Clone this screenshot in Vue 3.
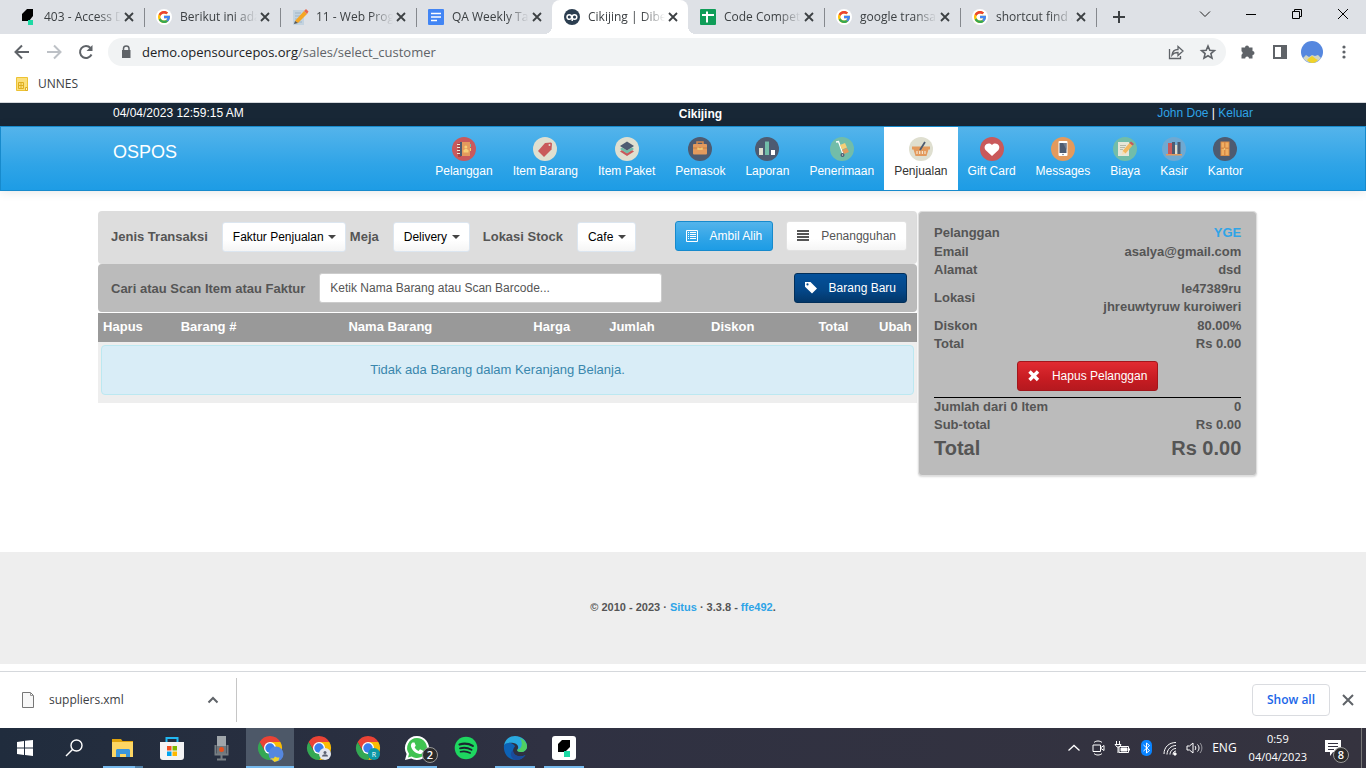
<script setup>
const googleMark = `<circle cx="8" cy="8" r="8" fill="#fff"/><g transform="translate(.8 .8) scale(.3)">
<path fill="#FFC107" d="M43.6 20.1H42V20H24v8h11.3c-1.6 4.7-6.1 8-11.3 8-6.600 0-12-5.400-12-12s5.400-12 12-12c3.100 0 5.800 1.200 8 3l5.600-5.600C34 6.100 29.300 4 24 4 13 4 4 13 4 24s9 20 20 20 20-9 20-20c0-1.300-.1-2.600-.4-3.900z"/>
<path fill="#EA4335" d="M6.300 14.700l6.600 4.800C14.700 15.100 19 12 24 12c3.100 0 5.800 1.200 8 3l5.600-5.600C34 6.100 29.300 4 24 4 16.300 4 9.700 8.300 6.300 14.700z"/>
<path fill="#34A853" d="M24 44c5.200 0 9.900-2 13.400-5.200l-6.200-5.200C29.200 35.100 26.700 36 24 36c-5.200 0-9.600-3.300-11.300-7.900l-6.500 5C9.500 39.600 16.200 44 24 44z"/>
<path fill="#4285F4" d="M43.600 20.100H24V28h11.300c-.8 2.200-2.200 4.200-4.100 5.600l6.200 5.200C37 39.200 44 34 44 24c0-1.300-.1-2.600-.4-3.900z"/></g>`

const tabs = [
  { title: '403 - Access D', sep: true, icon: '<path fill="#000" d="M7 0h6v7l-4 5H2V5z"/><path fill="#1ed9a4" d="M8 11h5v5H8z"/>' },
  { title: 'Berikut ini ada', sep: true, icon: googleMark },
  { title: '11 - Web Prog', sep: true, icon: '<path fill="#c3d3e0" d="M1 1h11v15H1z"/><path stroke="#9fb3c4" d="M3 4h6M3 7h6M3 10h4M3 13h7"/><path fill="#f5a623" d="M3 12L12 2l3 3-9 9z"/><path fill="#e8674d" d="M12 2l2-2 2.500 2.500L15 5z"/><path fill="#555" d="M3 12l3 2-4 1z"/>' },
  { title: 'QA Weekly Ta', sep: false, icon: '<rect width="16" height="16" rx="1" fill="#4285f4"/><path stroke="#fff" stroke-width="1.500" d="M3 4.500h10M3 8h10M3 11.500h6"/>' },
  { title: 'Cikijing | Dibe', sep: false, active: true, icon: '<circle cx="8" cy="8" r="8" fill="#2c3e50"/><g fill="none" stroke="#fff" stroke-width="1.500"><circle cx="5.300" cy="8" r="2.300"/><circle cx="10.500" cy="8" r="2.300"/><path d="M8.200 7v5"/></g>' },
  { title: 'Code Compet', sep: true, icon: '<rect width="16" height="16" rx="1" fill="#0f9d58"/><path stroke="#fff" stroke-width="2" d="M2 6h12M7 2.500v11"/>' },
  { title: 'google transa', sep: true, icon: googleMark },
  { title: 'shortcut find a', sep: true, icon: googleMark },
]

const modules = [
  { name: 'Pelanggan', bg: '#c9595b', icon: '<path fill="#a44" d="M6 6h3v14H6z"/><path stroke="#f1e9d8" d="M5 7.500h3M5 10.500h3M5 13.500h3M5 16.500h3"/><path fill="#4d5b71" d="M8 5h2v14H8z"/><path fill="#e39a5d" d="M10 5h8v14h-8z"/><path stroke="#6fbfa9" d="M18.500 7v3"/><path stroke="#f2d16b" d="M18.500 11v3"/><circle cx="13.800" cy="10" r="1.500" fill="#f6cf77"/><path fill="#f6cf77" d="M11.500 15.500v-2l1.500-1.500h2l1.500 1.500v2z"/>' },
  { name: 'Item Barang', bg: '#dfdfd0', icon: '<path fill="#c9595b" d="M12 6l6-.5 1 1-.5 6L11 20l-6-6z"/><circle cx="16.500" cy="8" r="1" fill="#dfdfd0"/>' },
  { name: 'Item Paket', bg: '#dfdfd0', icon: '<path fill="#c9595b" d="M5 14.500l7 4.500 7-4.500-2-1.500-5 3-5-3z"/><path fill="#72bda9" d="M5 12l7 4.500 7-4.500-2-1.500-5 3-5-3z"/><path fill="#4d5b71" d="M12 4.500l7 4.500-7 4.500L5 9z"/>' },
  { name: 'Pemasok', bg: '#4d5b71', icon: '<path fill="none" stroke="#d48a4e" stroke-width="1.500" d="M9 7V5h6v2"/><rect x="5" y="7" width="14" height="10.500" rx="1" fill="#e39a5d"/><path stroke="#c9803f" d="M5 11h14"/><path fill="none" stroke="#f6cf77" stroke-width="1.300" d="M10 10.500v1.500h4v-1.500"/>' },
  { name: 'Laporan', bg: '#4d5b71', icon: '<path fill="#dfdfd0" d="M4 11h4v7H4z"/><path fill="#72bda9" d="M10 4.500h4V18h-4z"/><path fill="#fff" d="M16 13h4v5h-4z"/>' },
  { name: 'Penerimaan', bg: '#72bda9', icon: '<path fill="none" stroke="#fff" stroke-width="1.300" d="M6 5l2.500-.5L13 17"/><path fill="#f6cf77" d="M10 8l5-2 2 4.500-5 2z"/><path fill="#e39a5d" d="M12 13l5-2 2 4-5 2z"/><circle cx="12.500" cy="18" r="2" fill="#4d5b71"/><circle cx="12.500" cy="18" r=".7" fill="#dfdfd0"/>' },
  { name: 'Penjualan', bg: '#dfdfd0', active: true, icon: '<path fill="#e39a5d" d="M3 9.500h18v3h-1.500L17.500 19h-11L4.500 12.500H3z"/><path stroke="#f5e6cf" stroke-width="1.200" d="M8 14v3M10.700 14v3M13.400 14v3M16 14v3"/><path stroke="#4d5b71" stroke-width="1.800" d="M11 13l5-8"/>' },
  { name: 'Gift Card', bg: '#c9595b', icon: '<path fill="#fff" d="M12 19l-6.500-6c-3-4 2.500-9 6.500-5 4-4 9.500 1 6.500 5z"/>' },
  { name: 'Messages', bg: '#e39a5d', icon: '<rect x="7.500" y="4" width="9" height="15" rx="1" fill="#fff"/><path fill="#4d5b71" d="M8.500 6h7v10h-7z"/><path fill="#6f7c90" d="M12 6h3.500v7z"/><circle cx="12" cy="17.500" r=".7" fill="#4d5b71"/>' },
  { name: 'Biaya', bg: '#72bda9', icon: '<path fill="#e6e6d8" d="M5 5h11v14H5z"/><path stroke="#b5b9a9" d="M7 8.500h6M7 10.500h5M7 12.500h3"/><path fill="#f3b85e" d="M9.500 14l7-8 3 2.500-7 8z"/><path fill="#c9595b" d="M16.500 6l1.500-1.500 3 2.500-1.500 1.500z"/><path fill="#f7dfb6" d="M9.500 14l3 2.500-4 1.500z"/>' },
  { name: 'Kasir', bg: '#6fa9d2', icon: '<path fill="#c9595b" d="M6 6h4v11H6z"/><path fill="#4d5b71" d="M10 5h3v12h-3z"/><path fill="#dfdfd0" d="M13 8h2.500v9H13z"/><path fill="#4d5b71" d="M15.500 5h3v12h-3z"/><path fill="#e39a5d" d="M4 17h16v1.500H4z"/>' },
  { name: 'Kantor', bg: '#4d5b71', icon: '<path fill="#d98b46" d="M7.500 4.500h9V19h-9z"/><path fill="#f0ae62" d="M8.500 5.500H11v5H8.500zM12.500 5.500H15.500v5h-3zM8.500 12H11v6H8.500zM12.500 12h3v6h-3z"/><circle cx="11.500" cy="12" r=".8" fill="#f6e08a"/>' },
]

const columns = [
  ['Hapus', 'c-del'], ['Barang #', 'c-num'], ['Nama Barang', 'c-name'], ['Harga', 'c-price'],
  ['Jumlah', 'c-price'], ['Diskon', 'c-num'], ['Total', 'c-price'], ['Ubah', 'c-edit'],
]

const customer = [
  ['Email', 'asalya@gmail.com'], ['Alamat', 'dsd'], ['Lokasi', 'le47389ru\njhreuwtyruw kuroiweri'],
  ['Diskon', '80.00%'], ['Total', 'Rs 0.00'],
]

const chrome = '<path fill="#ea4335" d="M1.600 6A12 12 0 0 1 22.400 6H12L6.800 15z"/><path fill="#fbbc04" d="M22.400 6A12 12 0 0 1 12 24l5.200-9L12 6z"/><path fill="#34a853" d="M1.600 6l5.200 9h10.400L12 24A12 12 0 0 1 1.600 6z"/><circle cx="12" cy="12" r="6" fill="#fff"/><circle cx="12" cy="12" r="4.700" fill="#3b7ded"/>'

const apps = [
  { name: 'Start', icon: '<path fill="#fff" d="M4 6l7-1v6.500H4zM12 4.800L20 4v7.500h-8zM4 12.500h7V19l-7-1zM12 12.500h8V20l-8-1z"/>' },
  { name: 'Search', icon: '<circle cx="14.500" cy="9.500" r="5.500" fill="none" stroke="#fff" stroke-width="1.400"/><path stroke="#fff" stroke-width="1.500" d="M10.500 13.500L4 20"/>' },
  { name: 'File Explorer', run: 'multi', icon: '<path fill="#e0a30c" d="M1 3h9l1.500 2H22v3H1z"/><path fill="#fdd663" d="M1 6h21v15H1z"/><path fill="#3b96dc" d="M5 14l1-1h12l1 1v7h-4v-3H9v3H5z"/>' },
  { name: 'Microsoft Store', icon: '<path fill="none" stroke="#22b8f2" stroke-width="2" d="M6.500 7V2h11v5"/><path fill="#f4f4f4" d="M0 6h24v15a3 3 0 0 1-3 3H3a3 3 0 0 1-3-3z"/><path fill="#f25022" d="M7 10h4.500v4.500H7z"/><path fill="#7fba00" d="M12.500 10H17v4.500h-4.500z"/><path fill="#00a4ef" d="M7 15.500h4.500V20H7z"/><path fill="#ffb900" d="M12.500 15.500H17V20h-4.500z"/>' },
  { name: 'Recorder', icon: '<path fill="#a0a6aa" d="M8 0h9v10H8z"/><path fill="#6f777c" d="M8 10h9v8H8z"/><path fill="none" stroke="#777e83" stroke-width="2" d="M6.500 9v9.500h12V9M12.500 19v4M8 23.500h9"/><circle cx="12.500" cy="13.500" r="2.500" fill="#e8501c"/>' },
  { name: 'Chrome, first profile', run: 'on', focus: true, icon: chrome + '<circle cx="18" cy="18" r="7.500" fill="#5587df"/><path fill="#f0d32a" d="M12.500 22l3 .5 1.500-2 2 1 2.500 0-1 3-4 1.500z"/>' },
  { name: 'Chrome, second profile', icon: chrome + '<circle cx="18" cy="18" r="6" fill="#e4e7ee"/><circle cx="18" cy="16.500" r="1.500" fill="#5b6070"/><path fill="#5b6070" d="M15 20.500c0-3 6-3 6 0z"/>' },
  { name: 'Chrome, third profile', icon: chrome + '<circle cx="18" cy="18" r="6" fill="#0d98a6"/><text x="18" y="20.500" text-anchor="middle" font-family="Open Sans, sans-serif" font-size="7" fill="#fff">R</text>' },
  { name: 'WhatsApp', run: 'on', badge: '2', icon: '<path fill="#fff" d="M12 0a12 12 0 1 1-5.800 22.500L0 24l1.600-6A12 12 0 0 1 12 0z"/><path fill="#40c351" d="M12 2a10 10 0 1 1-5.300 18.500L3 21.400l1-3.600A10 10 0 0 1 12 2z"/><path fill="#fff" d="M7.500 6.500h2l1.300 3.200-1.200 1.500c1 1.900 2.200 3 4 3.700l1.400-1.600 3.200 1.500c0 2.500-2 3.500-3.500 3.200C10 17.200 7 14 6 10.500c-.3-1.500.3-3.200 1.500-4z"/>' },
  { name: 'Spotify', icon: '<circle cx="12" cy="12" r="11.300" fill="#1ed760"/><g fill="none" stroke="#1b2630" stroke-linecap="round"><path stroke-width="2.200" d="M5.500 8.500c4.500-1.300 9.500-.8 13.300 1.400"/><path stroke-width="1.900" d="M6 12.300c4-1.100 8-.6 11.500 1.400"/><path stroke-width="1.600" d="M6.500 15.800c3.400-.9 6.600-.5 9.700 1.200"/></g>' },
  { name: 'Edge', run: 'on', icon: '<path fill="#0d62b5" d="M1 9C0 17 5 24 13 24c4 0 7.500-2 9.500-5-6 3-12 1-12.500-4 0-3 2-4 2-5C9 6 3 5 1 9z"/><path fill="#2aa9e0" d="M1 9C2.500 3 7 0 12 0c7.500 0 12 5.500 12 10 0 4-3 6-6 6-2.500 0-4.500-1-3.500-2.500 2-3-.5-6-4-6.500C6.500 6.400 3 7 1 9z"/><path fill="#50cf62" d="M17 2c5 2 7 5.500 7 8.500 0 3.500-3 5.500-6 5.500-2.500 0-4.500-1-3.500-2.500 4 0 6-6 2.500-11.500z"/><path fill="#1b4b9a" d="M10 14c0 5 6 8 12.500 5-2 3-5 5-9.500 5-5-1-7-7-3-10z"/>' },
  { name: 'Katalon', run: 'on', icon: '<rect width="24" height="24" rx="3" fill="#fff"/><path fill="#000" d="M10 4h8v7l-5 5H6V8z"/><path fill="#1ed9a4" d="M12 15h6v6h-6z"/>' },
]

const tray = [
  '<path stroke-width="1.300" d="M2.500 10.500L8 5.500l5.500 5"/>',
  '<path d="M4 2.500c2-2 6-2 8 0M4 13.500c2 2 6 2 8 0M3 5h7.500v6.500H3zM11 7.500l3-2v5l-3-2"/>',
  '<path d="M5 6.500h9.500v6H5zM15.500 8.500v2M2.500 1v3M5.500 1v3M1 4.500h6L5.500 7H3zM4 7v6"/><path fill="#fff" d="M7 8h6v3H7z"/>',
  '<rect x="3" y="0" width="11" height="16" rx="5" fill="#0a84ff" stroke="none"/><path d="M5.500 5l6 5.500-3 2.500V3l3 2.500-6 5.500"/>',
  '<path d="M2 14C2 7 7 2.500 14 2.500M5 14.500c0-5 4-9 9-9M8 14.500c0-3.500 3-6 6-6M11 14.500c0-2 1.500-3.500 3-3.500"/><path fill="#fff" d="M12 13h2v2h-2z"/>',
  '<path d="M1 6h2.500L7 3v10l-3.500-3H1zM9 6c1 1 1 3 0 4M11.500 4.500c2 2 2 5 0 7"/><path opacity=".5" d="M14 3c2.500 3 2.500 7 0 10"/>',
]
</script>

<template>
  <div class="desktop">
    <header class="browser">
      <div class="tabstrip">
        <div v-for="t in tabs" :key="t.title" class="tab" :class="{ active: t.active, sep: t.sep }">
          <svg class="i16" viewBox="0 0 16 16" v-html="t.icon"></svg>
          <span class="tab-title">{{ t.title }}</span>
          <button class="bare" aria-label="Close tab">
            <svg class="i16" viewBox="0 0 16 16"><path stroke="#3c4043" stroke-width="1.800" d="M4 4l8 8M12 4l-8 8" /></svg>
          </button>
        </div>
        <button class="bare new-tab" aria-label="New tab">
          <svg class="i16" viewBox="0 0 16 16"><path stroke="#3c4043" stroke-width="2" d="M8 2v12M2 8h12" /></svg>
        </button>
        <div class="window-buttons">
          <button class="bare" aria-label="Search tabs"><svg class="i16" viewBox="0 0 16 16"><path fill="none" stroke="#222" d="M3 5.500l5 5 5-5" /></svg></button>
          <button class="bare" aria-label="Minimize"><svg class="i16" viewBox="0 0 16 16"><path stroke="#000" d="M3 8.500h10" /></svg></button>
          <button class="bare" aria-label="Restore"><svg class="i16" viewBox="0 0 16 16"><path fill="none" stroke="#000" d="M3.500 5.500h7v7h-7zM5.500 5V3.500h7v7H11" /></svg></button>
          <button class="bare" aria-label="Close window"><svg class="i16" viewBox="0 0 16 16"><path stroke="#000" d="M3 3l10 10M13 3L3 13" /></svg></button>
        </div>
      </div>
      <div class="toolbar">
        <button class="bare tool" aria-label="Back"><svg class="i16" viewBox="0 0 16 16"><path fill="none" stroke="#5f6368" stroke-width="2" d="M15 8H2M8 1.500L1.500 8 8 14.500" /></svg></button>
        <button class="bare tool" aria-label="Forward"><svg class="i16" viewBox="0 0 16 16"><path fill="none" stroke="#bdc1c6" stroke-width="2" d="M1 8h13M8 1.500L14.500 8 8 14.500" /></svg></button>
        <button class="bare tool" aria-label="Reload"><svg class="i16" viewBox="0 0 16 16"><path fill="none" stroke="#5f6368" stroke-width="2" d="M13.500 10.500A6 6 0 1 1 12.500 4" /><path fill="#5f6368" d="M14.500 1v6h-6z" /></svg></button>
        <div class="omnibox">
          <svg class="i16" viewBox="0 0 16 16"><path fill="#5f6368" d="M4 6h8.500v8H4z" /><path fill="none" stroke="#5f6368" stroke-width="1.500" d="M5.500 6V4.500c0-3.500 5.500-3.500 5.500 0V6" /></svg>
          <a class="url" href="#">demo.opensourcepos.org<span>/sales/select_customer</span></a>
          <button class="bare tool" aria-label="Share"><svg class="i16" viewBox="0 0 16 16"><path fill="none" stroke="#5f6368" stroke-width="1.300" d="M1.500 5v9.500h11V12M4 11c.5-4 3-5.500 6-5.500V2.500l5 4.500-5 4.500v-3c-3 0-4.500.5-6 2.500z" /></svg></button>
          <button class="bare tool" aria-label="Bookmark"><svg class="i16" viewBox="0 0 16 16"><path fill="none" stroke="#5f6368" stroke-width="1.600" d="M8 2l1.800 4.200 4.600.4-3.500 3 1.100 4.500L8 11.700l-4 2.400 1.100-4.500-3.500-3 4.600-.4z" /></svg></button>
        </div>
        <button class="bare tool" aria-label="Extensions"><svg class="i16" viewBox="0 0 16 16"><path fill="#5f6368" d="M1.500 3.500H5a2 2 0 0 1 4 0h3.500V7a2 2 0 0 1 0 4v3.500H9a1.900 1.900 0 0 0-3.800 0H1.500v-3.800a1.900 1.900 0 0 0 0-3.500z" /></svg></button>
        <button class="bare tool" aria-label="Side panel"><svg class="i16" viewBox="0 0 16 16"><path fill="none" stroke="#5f6368" stroke-width="2" d="M2 2h12v12H2z" /><path fill="#5f6368" d="M9 2h5v12H9z" /></svg></button>
        <button class="bare tool" aria-label="Profile"><svg class="i22" viewBox="0 0 22 22"><circle cx="11" cy="11" r="11" fill="#5587df" /><path fill="#cfd4c4" d="M2 17l3-3 3 2 3-2 3 1 3-1 3 3c-4 6-14 6-18 0z" /><path fill="#f0d32a" d="M6 19l2-2 3-2 4 3 2 1c-3 4-8 4-11 0z" /></svg></button>
        <button class="bare tool" aria-label="Menu"><svg class="i16" viewBox="0 0 16 16"><g fill="#5f6368"><circle cx="8" cy="3" r="1.600" /><circle cx="8" cy="8" r="1.600" /><circle cx="8" cy="13" r="1.600" /></g></svg></button>
      </div>
      <nav class="bookmarks">
        <a href="#">
          <svg class="i16" viewBox="0 0 16 16"><path fill="#fbdf7b" stroke="#edc233" d="M2.500 1.500h11v13h-11z" /><path fill="none" stroke="#dfae20" d="M4.500 6.500h5v6h-5zM4.500 9.500h5M7 6.500v6" /><path fill="#fff1bc" stroke="#dfae20" d="M11.500 11.500h2v3h-2z" /></svg>
          UNNES
        </a>
      </nav>
    </header>

    <main class="site">
      <div class="topbar">
        <div class="container topbar-inner">
          <time>04/04/2023 12:59:15 AM</time>
          <strong>Cikijing</strong>
          <span><a href="#">John Doe</a> | <a href="#">Keluar</a></span>
        </div>
      </div>
      <div class="navbar">
        <div class="container navbar-inner">
          <a class="brand" href="#">OSPOS</a>
          <nav class="modules">
            <a v-for="m in modules" :key="m.name" href="#" :class="{ current: m.active }">
              <svg class="i24" viewBox="0 0 24 24"><circle cx="12" cy="12" r="12" :fill="m.bg" /><g v-html="m.icon"></g></svg>
              {{ m.name }}
            </a>
          </nav>
        </div>
      </div>

      <div class="container sale">
        <section class="register">
          <form class="mode-bar" @submit.prevent>
            <label for="mode">Jenis Transaksi</label>
            <span class="pick"><select id="mode"><option>Faktur Penjualan</option></select></span>
            <label for="dining" class="near">Meja</label>
            <span class="pick"><select id="dining"><option>Delivery</option></select></span>
            <label for="stock">Lokasi Stock</label>
            <span class="pick"><select id="stock"><option>Cafe</option></select></span>
            <button class="btn info push">
              <svg class="i12" viewBox="0 0 12 12"><path fill="none" stroke="currentColor" d="M.5.5h11v11H.5z" /><path stroke="currentColor" d="M2 2.500h1M4 2.500h6M2 4.500h1M4 4.500h6M2 6.500h1M4 6.500h6M2 8.500h1M4 8.500h6" /></svg>
              Ambil Alih
            </button>
            <button class="btn plain">
              <svg class="i12" viewBox="0 0 12 12"><path stroke="currentColor" stroke-width="2" d="M0 1h12M0 4h12M0 7h12M0 10h12" /></svg>
              Penangguhan
            </button>
          </form>
          <form class="item-bar" @submit.prevent>
            <label for="item">Cari atau Scan Item atau Faktur</label>
            <input id="item" type="text" placeholder="Ketik Nama Barang atau Scan Barcode..." />
            <button class="btn primary push">
              <svg class="i12" viewBox="0 0 12 12"><path fill="currentColor" fill-rule="evenodd" d="M0 0h5.500L12 6.500 7 11.500 0 4.800zM2.500 1.300a1.100 1.100 0 1 0 0 2.200 1.100 1.100 0 0 0 0-2.200z" /></svg>
              Barang Baru
            </button>
          </form>
          <table class="cart">
            <thead>
              <tr><th v-for="c in columns" :key="c[0]" :class="c[1]" scope="col">{{ c[0] }}</th></tr>
            </thead>
            <tbody>
              <tr><td colspan="8"><div class="notice">Tidak ada Barang dalam Keranjang Belanja.</div></td></tr>
            </tbody>
          </table>
        </section>

        <aside class="overview">
          <table>
            <tbody>
              <tr><th scope="row">Pelanggan</th><td><a href="#">YGE</a></td></tr>
              <tr v-for="r in customer" :key="r[0]"><th scope="row">{{ r[0] }}</th><td>{{ r[1] }}</td></tr>
            </tbody>
          </table>
          <button class="btn danger">
            <svg class="i12" viewBox="0 0 12 12"><path stroke="currentColor" stroke-width="3.400" d="M1.500 1.500l8.500 8.500M10 1.500L1.500 10" /></svg>
            Hapus Pelanggan
          </button>
          <table class="totals">
            <tbody>
              <tr><th scope="row">Jumlah dari 0 Item</th><td>0</td></tr>
              <tr><th scope="row">Sub-total</th><td>Rs 0.00</td></tr>
              <tr class="grand"><th scope="row">Total</th><td>Rs 0.00</td></tr>
            </tbody>
          </table>
        </aside>
      </div>

      <footer class="site-footer">© 2010 - 2023 · <a href="#">Situs</a> · 3.3.8 - <a href="#">ffe492</a>.</footer>
    </main>

    <div class="shelf">
      <button class="bare download">
        <svg class="i16" viewBox="0 0 16 16"><path fill="#f8f8f8" stroke="#777" d="M2.500.5h8l3 3v12h-11z" /><path fill="none" stroke="#999" d="M10.500.5v3h3" /></svg>
        <span>suppliers.xml</span>
        <svg class="i16" viewBox="0 0 16 16"><path fill="none" stroke="#5f6368" stroke-width="2" d="M3.500 10.500L8 6l4.500 4.500" /></svg>
      </button>
      <button class="show-all">Show all</button>
      <button class="bare shelf-close" aria-label="Close downloads bar"><svg class="i16" viewBox="0 0 16 16"><path stroke="#5f6368" stroke-width="2" d="M3 3l10 10M13 3L3 13" /></svg></button>
    </div>

    <div class="taskbar">
      <button v-for="a in apps" :key="a.name" class="bare app" :class="[a.run, { focus: a.focus }]" :aria-label="a.name">
        <svg class="i24" viewBox="0 0 24 24" v-html="a.icon"></svg>
        <span v-if="a.badge" class="badge">{{ a.badge }}</span>
      </button>
      <div class="tray">
        <svg v-for="(g, n) in tray" :key="n" class="i16" viewBox="0 0 16 16" fill="none" stroke="#fff" v-html="g"></svg>
        <span class="lang">ENG</span>
        <time class="clock">0:59<br />04/04/2023</time>
        <button class="bare app notifications" aria-label="Notifications">
          <svg class="i16" viewBox="0 0 16 16"><path fill="#fff" d="M0 0h16v12H8l-3 4v-4H0z" /><path stroke="#33313f" d="M3 3.500h10M3 6.500h10M3 9.500h6" /></svg>
          <span class="badge">8</span>
        </button>
        <span class="peek"></span>
      </div>
    </div>
  </div>
</template>

<style>
body { margin: 0; background: #fff; }
</style>

<style scoped>
.desktop { min-height: 100vh; display: flex; flex-direction: column; font: 12px/16px "Open Sans", "Noto Sans", sans-serif; color: #3c4043; }
.desktop * { box-sizing: border-box; }
svg { display: block; flex: none; overflow: visible; }
a { text-decoration: none; color: #2fa4e7; }
.i12 { width: 12px; height: 12px; }
.i16 { width: 16px; height: 16px; }
.i22 { width: 22px; height: 22px; }
.i24 { width: 24px; height: 24px; }
.bare { border: 0; padding: 0; background: none; font: inherit; color: inherit; display: flex; align-items: center; }

.tabstrip { height: 34px; background: #dee1e6; display: flex; padding-left: 8px; }
.tab { flex: 0 1 136px; min-width: 0; display: flex; align-items: center; padding: 0 7px 0 12px; position: relative; }
.tab-title { flex: 1; min-width: 0; margin-left: 8px; white-space: nowrap; mask-image: linear-gradient(90deg, #000 70%, transparent); }
.tab.sep::after { content: ""; position: absolute; right: -1px; top: 8px; width: 1px; height: 19px; background: #85888d; }
.tab.active { background: #fff; border-radius: 8px 8px 0 0; }
.tab.active::before, .tab.active::after { content: ""; position: absolute; bottom: 0; width: 8px; height: 8px; }
.tab.active::before { left: -8px; background: radial-gradient(circle at 0 0, transparent 8px, #fff 8px); }
.tab.active::after { right: -8px; background: radial-gradient(circle at 100% 0, transparent 8px, #fff 8px); }
.new-tab { margin-left: 15px; }
.window-buttons { margin-left: auto; display: flex; height: 28px; }
.window-buttons .bare { width: 46px; justify-content: center; }

.toolbar { height: 36px; display: flex; align-items: center; padding: 0 6px; }
.tool { width: 32px; height: 28px; justify-content: center; }
.omnibox { flex: 1; height: 28px; margin: 0 6px; border-radius: 14px; background: #f1f3f4; display: flex; align-items: center; padding: 0 2px 0 10px; }
.url { flex: 1; margin-left: 8px; font-size: 13px; color: #202124; }
.url span { color: #5f6368; }
.bookmarks { height: 33px; border-bottom: 1px solid #d5d8dc; padding: 6px 14px; }
.bookmarks a { display: flex; align-items: center; gap: 8px; color: #3c4043; }

.site { flex: 1; display: flex; flex-direction: column; font: 13px/19px "Liberation Sans", Arial, sans-serif; color: #555; }
.container { width: 100%; max-width: 1170px; margin: 0 auto; }
.topbar { background: #182736; color: #fff; font-size: 12px; }
.topbar-inner { display: flex; justify-content: space-between; padding: 1px 15px 3px; }
.topbar strong { padding-top: 1px; line-height: 18px; }
.navbar { border: 1px solid #178acc; background: linear-gradient(#54b4eb, #2fa4e7 60%, #1d9ce5); box-shadow: 0 1px 10px rgba(0, 0, 0, .1); }
.navbar-inner { display: flex; justify-content: space-between; padding: 0 15px; }
.brand { color: #fff; font-size: 18px; padding-top: 16px; }
.modules { display: flex; }
.modules a { padding: 10px 10px 9px; display: flex; flex-direction: column; align-items: center; gap: 1px; color: #fff; font-size: 12px; white-space: nowrap; }
.modules a.current { background: #fff; color: #333; }

.sale { display: flex; align-items: flex-start; gap: 1px; padding: 20px 0 24px; flex: 1; }
.register { flex: 0 0 70%; }
.mode-bar, .item-bar { display: flex; align-items: flex-start; padding: 10px 10px 12px 13px; border-radius: 4px; }
.mode-bar { background: #ddd; min-height: 53px; }
.item-bar { background: #bbb; padding-top: 9px; padding-bottom: 9px; }
label { font-weight: 700; line-height: 30px; padding-top: 1px; margin: 0 14px 0 0; white-space: nowrap; height: 30px; }
.pick + label { margin-left: 13px; }
.pick + .near { margin-left: 4px; }
.pick { position: relative; padding-top: 1px; }
.pick::after { content: ""; position: absolute; right: 10px; top: 14px; border: 4px solid transparent; border-top-color: #444; border-bottom: 0; pointer-events: none; }
select { appearance: none; display: block; height: 30px; padding: 0 21px 0 10px; border: 1px solid #dce6f0; border-radius: 3px; background: linear-gradient(#fff, #fff 60%, #f5f5f5); color: #000; font: 12px/18px "Liberation Sans", Arial, sans-serif; }
.btn { height: 30px; border: 1px solid; border-radius: 3px; padding: 0 10px; display: flex; align-items: center; gap: 12px; font: 12px/18px "Liberation Sans", Arial, sans-serif; color: #fff; white-space: nowrap; }
.push { margin-left: auto; }
.btn.info { background: linear-gradient(#54b4eb, #2fa4e7 60%, #1d9ce5); border-color: #178acc; }
.btn.plain { margin-left: 13px; color: #555; background: linear-gradient(#fff, #fff 60%, #f5f5f5); border-color: #e2e2e2; }
.btn.primary { background: linear-gradient(#04519b, #044687 60%, #033769); border-color: #022f5a; }
.btn.danger { background: linear-gradient(#e12b31, #c71c22 60%, #b5191f); border-color: #a3161b; margin: 7px auto 6px; }
input { flex: 0 1 43%; min-width: 0; height: 30px; border: 1px solid #ccc; border-radius: 3px; padding: 0 10px; background: #fff; color: #555; font: 12px/18px "Liberation Sans", Arial, sans-serif; }
input::placeholder { color: #555; opacity: 1; }
.cart { width: 100%; table-layout: fixed; border-collapse: collapse; margin-top: 1px; background: #eee; }
.cart th { background: #999; color: #fff; height: 29px; padding: 0 0 2px; }
.cart td { padding: 3px 3px 8px; }
.c-del { width: 6.100%; }
.c-num { width: 14.800%; }
.c-name { width: 29.600%; }
.c-price { width: 9.800%; }
.c-edit { width: 5.300%; }
.notice { border: 1px solid #bce8f1; border-radius: 4px; background: #d9edf7; color: #3a87ad; text-align: center; line-height: 18px; padding: 15px 35px 15px 15px; }

.overview { flex: 0 0 29%; background: #bbb; border: 1px solid #ddd; border-radius: 4px; box-shadow: 0 1px 2px rgba(0, 0, 0, .15); padding: 12px 15px 13px; font-weight: 700; line-height: 1.43; }
.overview table { width: 100%; border-collapse: collapse; }
.overview th { text-align: left; padding: 0; }
.overview td { text-align: right; padding: 0; white-space: pre-line; }
.totals { border-top: 1px solid #000; line-height: 18px; }
.grand { font-size: 20px; line-height: 28px; }
.site-footer { background: #eee; min-height: 112px; display: flex; align-items: center; justify-content: center; padding-bottom: 2px; font-size: 11px; font-weight: 700; white-space: pre; }

.shelf { margin-top: 7px; height: 57px; border-top: 1px solid #d5d8dc; display: flex; align-items: center; padding-right: 10px; }
.download { width: 237px; height: 44px; border-right: 1px solid #c6c6c6; padding: 0 15px 0 20px; }
.download span { flex: 1; text-align: left; margin-left: 13px; }
.show-all { margin-left: auto; height: 32px; width: 78px; border: 1px solid #dadce0; border-radius: 4px; background: #fff; color: #1a66e8; font: 600 12px/16px "Open Sans", sans-serif; padding: 0; }
.shelf-close { margin-left: 10px; }

.taskbar { height: 40px; display: flex; gap: 1px; padding-left: 1px; background: linear-gradient(90deg, #202c3d, #2f3142 40%, #35333f); color: #fff; }
.app { width: 48px; height: 40px; justify-content: center; position: relative; flex: none; }
.app.focus { background: #4d5868; }
.app.on::after, .app.multi::after { content: ""; position: absolute; left: 4px; right: 4px; bottom: 0; height: 2px; background: #76b9ed; }
.app.multi::after { background: linear-gradient(90deg, #76b9ed 80%, #4f7fa6 80%); }
.app.focus::after { left: 0; right: 0; }
.badge { position: absolute; right: 3px; bottom: 5px; width: 16px; height: 16px; border: 1px solid #999; border-radius: 50%; background: #2b2b2b; color: #fff; font: 600 11px/14px "Open Sans", sans-serif; text-align: center; }
.tray { margin-left: auto; display: flex; align-items: center; gap: 8px; }
.lang { margin-left: 2px; }
.clock { text-align: center; font-size: 11px; line-height: 18px; margin: 0 -2px 0 4px; }
.notifications { padding-right: 8px; }
.notifications .badge { right: 12px; }
.peek { width: 5px; height: 40px; border-left: 1px solid #777; margin-left: -8px; }
</style>
